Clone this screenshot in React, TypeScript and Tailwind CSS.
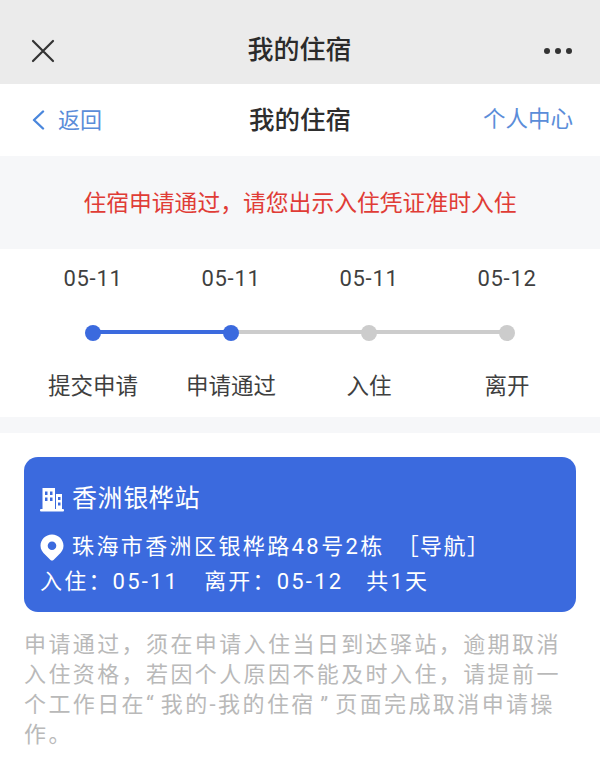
const cjk = "font-['Roboto','Inter','Noto_Sans_CJK_SC',sans-serif]"

const steps = [
  { date: '05-11', label: '提交申请', done: true },
  { date: '05-11', label: '申请通过', done: true },
  { date: '05-11', label: '入住', done: false },
  { date: '05-12', label: '离开', done: false },
]

function BuildingIcon() {
  return (
    <svg width="24" height="25" viewBox="0 0 24 25" className="flex-none" fill="#fff">
      <path d="M2.500 1h12.500v21H2.500zM5 4.500v3.500h2.500V4.500zm5 0v3.500h2.500V4.500zM5 10.500v3.500h2.500v-3.500zm5 0v3.500h2.500v-3.500zM16 7h6v15h-6zm2 3v3h2.500v-3zm0 5.500v3h2.500v-3z" fillRule="evenodd" />
      <rect x="0" y="22" width="24" height="2.500" rx="1" />
    </svg>
  )
}

function PinIcon() {
  return (
    <svg width="24" height="27" viewBox="0 0 24 27" className="flex-none" fill="#fff">
      <path d="M12 .5C5.600.5.5 5.500.5 11.800c0 3.800 2.100 6.700 5 9.300l5 4.800c.8.700 2.200.7 3 0l5-4.800c2.900-2.600 5-5.500 5-9.300C23.500 5.500 18.400.5 12 .5zm0 7a4.300 4.300 0 1 1 0 8.600 4.300 4.300 0 0 1 0-8.600z" fillRule="evenodd" />
    </svg>
  )
}

export default function App() {
  return (
    <div className={`w-[600px] h-[769px] overflow-hidden bg-white ${cjk}`}>
      {/* wechat bar */}
      <div className="h-[84px] bg-[#ebebeb] flex items-center justify-between pt-[17px] pl-[31px] pr-[28px]">
        <svg width="24" height="24" viewBox="0 0 24 24" fill="none" stroke="#333" strokeWidth="2.200" strokeLinecap="round">
          <path d="M2 2l20 20M22 2L2 22" />
        </svg>
        <span className="text-[26px] text-[#2b2b2b] font-medium">我的住宿</span>
        <div className="flex gap-[5px]">
          <i className="w-[6px] h-[6px] rounded-full bg-[#333]" />
          <i className="w-[6px] h-[6px] rounded-full bg-[#333]" />
          <i className="w-[6px] h-[6px] rounded-full bg-[#333]" />
        </div>
      </div>

      {/* page header */}
      <div className="h-[72px] flex items-center justify-between pl-[32px] pr-[27px]">
        <div className="w-[130px] flex items-center gap-[13px] text-[#5b8dd9] text-[22px]">
          <svg width="13" height="20" viewBox="0 0 13 20" fill="none" stroke="#4a86dc" strokeWidth="2.400" strokeLinecap="round" strokeLinejoin="round">
            <path d="M11 1.500L2 10l9 8.500" />
          </svg>
          <span>返回</span>
        </div>
        <span className="text-[25.500px] text-[#2e2e2e] font-medium -ml-[5px]">我的住宿</span>
        <span className="w-[130px] text-right text-[#5b8dd9] text-[22.500px]">个人中心</span>
      </div>

      {/* status notice */}
      <div className="h-[93px] bg-[#f6f7f9] flex items-center justify-center pt-[3px] text-[#e03c36] text-[22.800px]">
        住宿申请通过，请您出示入住凭证准时入住
      </div>

      {/* steps */}
      <div className="h-[168px] px-[24px] pt-[15px] grid grid-cols-4">
        {steps.map((s, i) => (
          <div key={i} className="flex flex-col items-center text-[#3f3f3f]">
            <span className="text-[22px] leading-[30px] tracking-[0.7px]">{s.date}</span>
            <div className="relative w-full h-[18px] mt-[30px] flex items-center justify-center">
              {i < 3 && (
                <div className={`absolute left-1/2 top-[6px] w-full h-[4px] ${s.done && steps[i + 1].done ? 'bg-[#3b6ade]' : 'bg-[#cccccc]'}`} />
              )}
              <div className={`relative w-[16px] h-[16px] rounded-full ${s.done ? 'bg-[#3b6ade]' : 'bg-[#cccccc]'}`} />
            </div>
            <span className="mt-[29px] text-[22.500px] leading-[30px]">{s.label}</span>
          </div>
        ))}
      </div>
      <div className="h-[16px] bg-[#f6f7f9]" />

      {/* station card */}
      <div className="mt-[24px] mx-[24px] h-[155px] rounded-[14px] bg-[#3b6ade] text-white px-[16px] pt-[24px]">
        <div className="flex items-center gap-[8px] h-[36px]">
          <BuildingIcon />
          <span className="text-[25px] tracking-[0.6px]">香洲银桦站</span>
        </div>
        <div className="flex items-center gap-[8px] mt-[14px] h-[32px]">
          <PinIcon />
          <span className="text-[22px] tracking-[2.400px] whitespace-nowrap -mt-[1px]">
            珠海市香洲区银桦路48号2栋<span className="ml-[12px] tracking-[1.400px]">［导航］</span>
          </span>
        </div>
        <div className="h-[36px] flex items-center text-[22px] tracking-[2.200px] whitespace-nowrap">
          <span>入住：05-11</span>
          <span className="ml-[25px]">离开：05-12</span>
          <span className="ml-[23px]">共1天</span>
        </div>
      </div>

      {/* note */}
      <p className="mt-[18px] mx-[24px] text-[22px] leading-[30px] tracking-[2.400px] text-[#b9b9b9]">
        {'申请通过，须在申请入住当日到达驿站，逾期取消入住资格，若因个人原因不能及时入住，请提前一个工作日在“\u200A我的-我的住宿\u200A”\u200A页面完成取消申请操作。'}
      </p>
    </div>
  )
}
